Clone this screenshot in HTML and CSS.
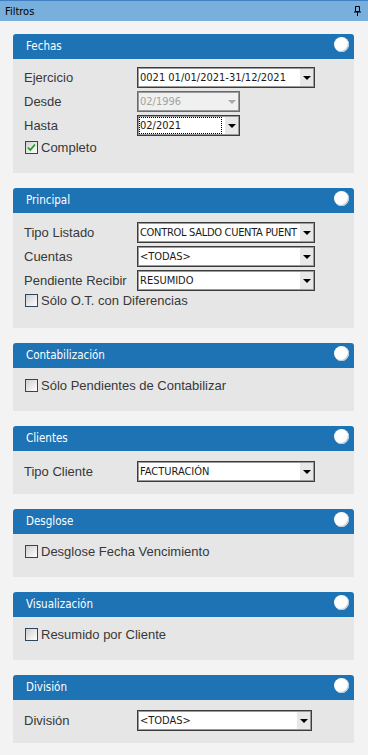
FILE: index.html
```html
<!DOCTYPE html>
<html lang="es">
<head>
    <meta charset="UTF-8">
    <title>Filtros</title>
    <link rel="stylesheet" href="styles.css">
</head>
<body>

    <div class="titlebar">
        <span>Filtros</span>
        <svg class="pin" width="7" height="10" viewBox="0 0 7 10">
            <path d="M1.5 0.5h4v5h-4z" fill="none" stroke="#000"/>
            <path d="M0 6h7M3.5 6v4" stroke="#000"/>
        </svg>
    </div>

    <div class="content">

        <section class="panel">
            <div class="panel-head"><span>Fechas</span><span class="knob"></span></div>
            <div class="panel-body body-dates">
                <div class="field">
                    <span class="field-label">Ejercicio</span>
                    <div class="combo combo-wide"><span class="combo-value">0021 01/01/2021-31/12/2021</span><span class="combo-arrow"></span></div>
                </div>
                <div class="field">
                    <span class="field-label">Desde</span>
                    <div class="combo combo-short is-disabled"><span class="combo-value">02/1996</span><span class="combo-arrow"></span></div>
                </div>
                <div class="field">
                    <span class="field-label">Hasta</span>
                    <div class="combo combo-short is-focused"><span class="combo-value">02/2021</span><span class="combo-arrow"></span></div>
                </div>
                <div class="check check-dates">
                    <span class="box">
                        <svg width="11" height="11" viewBox="0 0 11 11"><path d="M2 5.5l2.3 2.5 4.7-5.5" fill="none" stroke="#1f9a2a" stroke-width="1.8"/></svg>
                    </span>
                    Completo
                </div>
            </div>
        </section>

        <section class="panel">
            <div class="panel-head"><span>Principal</span><span class="knob"></span></div>
            <div class="panel-body body-main">
                <div class="field">
                    <span class="field-label">Tipo Listado</span>
                    <div class="combo combo-wide"><span class="combo-value tight">CONTROL SALDO CUENTA PUENT</span><span class="combo-arrow"></span></div>
                </div>
                <div class="field">
                    <span class="field-label">Cuentas</span>
                    <div class="combo combo-wide"><span class="combo-value">&lt;TODAS&gt;</span><span class="combo-arrow"></span></div>
                </div>
                <div class="field">
                    <span class="field-label">Pendiente Recibir</span>
                    <div class="combo combo-wide"><span class="combo-value">RESUMIDO</span><span class="combo-arrow"></span></div>
                </div>
                <div class="check"><span class="box"></span>Sólo O.T. con Diferencias</div>
            </div>
        </section>

        <section class="panel">
            <div class="panel-head"><span>Contabilización</span><span class="knob"></span></div>
            <div class="panel-body body-check">
                <div class="check"><span class="box"></span>Sólo Pendientes de Contabilizar</div>
            </div>
        </section>

        <section class="panel">
            <div class="panel-head"><span>Clientes</span><span class="knob"></span></div>
            <div class="panel-body body-select">
                <div class="field">
                    <span class="field-label">Tipo Cliente</span>
                    <div class="combo combo-wide"><span class="combo-value">FACTURACIÓN</span><span class="combo-arrow"></span></div>
                </div>
            </div>
        </section>

        <section class="panel">
            <div class="panel-head"><span>Desglose</span><span class="knob"></span></div>
            <div class="panel-body body-check">
                <div class="check"><span class="box"></span>Desglose Fecha Vencimiento</div>
            </div>
        </section>

        <section class="panel">
            <div class="panel-head"><span>Visualización</span><span class="knob"></span></div>
            <div class="panel-body body-check">
                <div class="check"><span class="box"></span>Resumido por Cliente</div>
            </div>
        </section>

        <section class="panel">
            <div class="panel-head"><span>División</span><span class="knob"></span></div>
            <div class="panel-body body-select">
                <div class="field">
                    <span class="field-label">División</span>
                    <div class="combo combo-division"><span class="combo-value">&lt;TODAS&gt;</span><span class="combo-arrow"></span></div>
                </div>
            </div>
        </section>

    </div>

</body>
</html>
```

FILE: styles.css
```css
body {
    margin: 0;
    background-color: #f3f3f3;
    font-family: 'Liberation Sans', Arial, sans-serif;
    color: #383838;
}

.titlebar {
    height: 20px;
    border-top: 1px solid #3f80c2;
    background-color: #78afdc;
    display: flex;
    align-items: center;
    justify-content: space-between;
    padding: 0 7px 0 5px;
    font-family: 'DejaVu Sans Condensed', 'DejaVu Sans', sans-serif;
    font-size: 11px;
    color: #000;
}

.pin {
    display: block;
}

.content {
    display: flex;
    flex-direction: column;
    gap: 15px;
    padding: 13px 14px 0 13px;
}

.panel-head {
    height: 25px;
    background-color: #1e73b5;
    border-radius: 3px 3px 0 0;
    display: flex;
    justify-content: space-between;
    padding: 0 5px 0 13px;
    font-family: 'DejaVu Sans Condensed', 'DejaVu Sans', sans-serif;
    font-size: 11.5px;
    color: #fff;
}

.panel-head span:first-child {
    line-height: 25px;
}

.knob {
    width: 15px;
    height: 15px;
    margin-top: 3px;
    border-radius: 50%;
    background-color: #fff;
    box-shadow: inset -1px -1px 1px #b9c6d4;
}

.panel-body {
    background-color: #e6e6e6;
    display: flex;
    flex-direction: column;
    gap: 3px;
    padding: 9px 11px 21px;
}

.body-dates {
    padding-top: 8px;
    padding-bottom: 19px;
}

.body-check {
    padding: 11px 11px 19px;
}

.body-select {
    padding: 10px 11px 12px;
}

.field {
    display: flex;
    align-items: center;
}

.field-label {
    width: 113px;
    font-size: 13px;
    line-height: 21px;
}

.combo {
    box-sizing: border-box;
    height: 21px;
    border: 1px solid #3c3c3c;
    box-shadow: inset 0 0 0 1px #9a9a9a;
    background-color: #fff;
    display: flex;
    align-items: stretch;
    padding: 1px;
    font-family: 'DejaVu Sans Condensed', 'DejaVu Sans', sans-serif;
    font-size: 11px;
    color: #1a1a1a;
}

.combo-wide {
    width: 178px;
}

.combo-short {
    width: 103px;
}

.combo-division {
    width: 175px;
}

.combo-value {
    flex: 1;
    overflow: hidden;
    white-space: nowrap;
    line-height: 17px;
    padding-left: 1px;
}

.tight {
    letter-spacing: -0.3px;
}

.combo-arrow {
    width: 13px;
    background-color: #e8e8e8;
    display: flex;
    align-items: center;
    justify-content: center;
}

.combo-arrow::after {
    content: '';
    border-left: 4px solid transparent;
    border-right: 4px solid transparent;
    border-top: 4px solid #000;
}

.is-disabled {
    background-color: #f0f0f0;
    border-color: #6a6a6a;
    color: #a2a2a2;
}

.is-disabled .combo-arrow {
    background-color: #f0f0f0;
}

.is-disabled .combo-arrow::after {
    border-top-color: #a8a8a8;
}

.is-focused .combo-value {
    outline: 1px dotted #000;
    outline-offset: -1px;
    margin-right: 3px;
}

.check {
    display: flex;
    align-items: center;
    gap: 3px;
    height: 13px;
    padding-left: 1px;
    font-size: 13px;
}

.check-dates {
    margin-top: 2px;
}

.box {
    width: 11px;
    height: 11px;
    border: 1px solid #2d4560;
    background: linear-gradient(135deg, #cfcfcf, #ffffff);
    display: flex;
    align-items: center;
    justify-content: center;
}
```
